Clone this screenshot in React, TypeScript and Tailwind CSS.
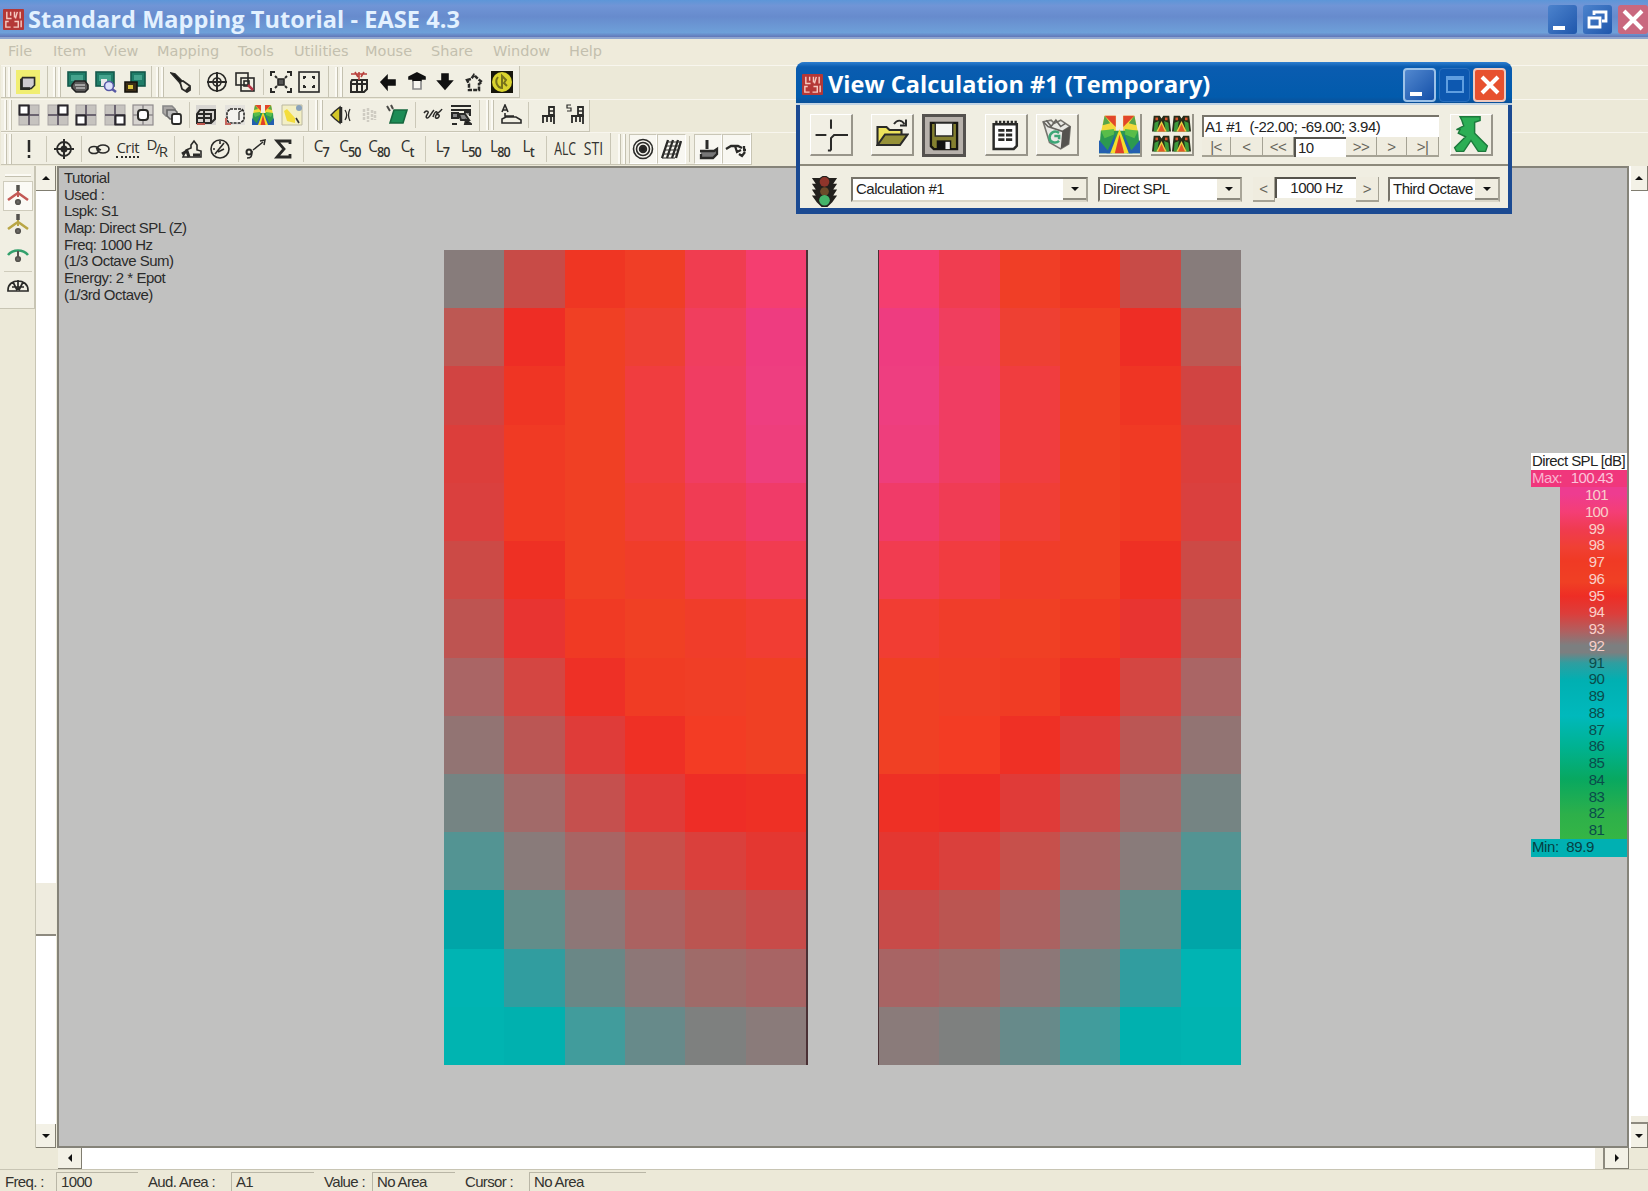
import React from "react";

type Kids = { children?: React.ReactNode };

const leftMap: string[][] = [
  ["#877c7b", "#c84b47", "#ef3623", "#f03e26", "#f03d50", "#f43e70"],
  ["#bd5853", "#ee2d25", "#f04024", "#ee4033", "#f03e5e", "#ee3c80"],
  ["#d14442", "#ef3524", "#f04024", "#f03d3f", "#f03d62", "#ee3e80"],
  ["#dc3e3b", "#f03a24", "#f04024", "#f03d3f", "#f03d62", "#ee3e7c"],
  ["#da403e", "#f03a24", "#f04024", "#f03e36", "#f03c54", "#f03b68"],
  ["#cc4a46", "#ee3024", "#f04024", "#f03d2a", "#f13c40", "#f13c50"],
  ["#be5451", "#e83431", "#f03a24", "#f04024", "#f03d2a", "#f13d33"],
  ["#aa6565", "#d44642", "#ee3026", "#f03c24", "#f03e26", "#f04024"],
  ["#927473", "#bb5654", "#df3c39", "#ef3025", "#f33c24", "#f04024"],
  ["#758483", "#a26a69", "#c5504e", "#e03b38", "#ee2d26", "#ee3025"],
  ["#539493", "#897b7a", "#a86564", "#c7504b", "#da403c", "#e43731"],
  ["#00a5a8", "#628d8a", "#8d7777", "#ab6261", "#bb5551", "#c84b49"],
  ["#00b4b3", "#319d9f", "#6a8786", "#8d7777", "#9f6b69", "#a86464"],
  ["#00b4b1", "#00b1af", "#419c9c", "#678a8a", "#7e807f", "#8a7b7a"],
];
const rightMap = leftMap.map((row) => [...row].reverse());

function HeatMap({ rows, className }: { rows: string[][]; className: string }) {
  return (
    <div className={`grid h-[815px] grid-cols-6 grid-rows-[repeat(14,minmax(0,1fr))] border-[#4a3034] ${className}`}>
      {rows.flat().map((c, i) => (
        <div key={i} style={{ backgroundColor: c }} />
      ))}
    </div>
  );
}

function Svg({ children, size = "size-[22px]" }: Kids & { size?: string }) {
  return (
    <svg viewBox="0 0 22 22" className={`${size} shrink-0`} fill="none" stroke="#2a2a28" strokeWidth="1.6">
      {children}
    </svg>
  );
}

function Slot({ children, pressed }: Kids & { pressed?: boolean }) {
  return (
    <div className={`flex h-[30px] w-[28.5px] shrink-0 items-center justify-center ${pressed ? "border border-[#c9c6b6] border-r-white border-b-white bg-[#f8f7f1]" : ""}`}>
      {children}
    </div>
  );
}

const Sep = ({ w = "w-[7px]" }: { w?: string }) => (
  <div className={`flex h-[26px] ${w} shrink-0 justify-center`}>
    <div className="w-px bg-[#cbc8b8]" />
  </div>
);

function Grip({ w }: { w: string }) {
  return (
    <div className={`flex h-[30px] shrink-0 justify-end gap-[2px] pr-[3px] ${w}`}>
      <div className="w-[3px] border-r border-[#c4c1b0] bg-[#fbfaf4]" />
      <div className="w-[3px] border-r border-[#c4c1b0] bg-[#fbfaf4]" />
    </div>
  );
}

const Group = ({ children }: Kids) => (
  <div className="flex h-[32px] items-center border-r border-b border-[#c8c5b4] bg-[#f1efe3]">{children}</div>
);

const Row = ({ children }: Kids) => <div className="flex h-[33.5px] items-start border-t border-[#f8f6ee]">{children}</div>;

function Sub({ a, b }: { a: string; b: string }) {
  return (
    <span className="flex scale-x-90 items-start font-['Open_Sans',sans-serif] leading-none text-[#33332f]">
      <span className="-mr-[1px] inline-block text-[17px] leading-[15px]">{a}</span>
      <span className="mt-[6px] text-[14px] leading-[16px] font-semibold tracking-[-1px]">{b}</span>
    </span>
  );
}

/* Four panes with one of them emphasised */
function Panes({ x, y, s = 9 }: { x: number; y: number; s?: number }) {
  return (
    <Svg>
      <rect x="1" y="1" width="20" height="20" fill="#c6c3bf" stroke="#a9a5a5" strokeWidth="1" />
      <path d="M11 1v20M1 11h20" stroke="#6b6470" strokeWidth="2" />
      <rect x={x} y={y} width={s} height={s} fill="#fff" stroke="#29262b" strokeWidth="2" />
    </Svg>
  );
}

function Screen({ extra }: { extra: "stack" | "find" | "print" }) {
  return (
    <Svg>
      {extra === "print" ? (
        <>
          <rect x="7" y="1" width="14" height="14" fill="#1f7d68" stroke="#15594c" />
          <path d="M10 4h8v5h-8z" fill="#45a38d" stroke="none" />
          <path d="M1 11h12v10H1z" fill="#3b2d18" stroke="#15120c" />
          <path d="M4 14h5v4H4z" fill="#d8c23a" stroke="none" />
        </>
      ) : (
        <>
          <rect x="1" y="1" width="18" height="14" fill="#1f7d68" stroke="#15594c" />
          <path d="M4 4h12v6H4z" fill="#45a38d" stroke="none" />
        </>
      )}
      {extra === "stack" && (
        <>
          <path d="M5 14l3-4h10l3 4v4l-3 3H9l-4-4z" fill="#5c5a5a" stroke="#222" />
          <path d="M8 14h10M9 17h9" stroke="#bbb" />
        </>
      )}
      {extra === "find" && (
        <>
          <path d="M6 8h6v7H6z" fill="#e9e9e9" stroke="none" />
          <circle cx="14" cy="15" r="4.5" fill="#dce0fb" stroke="#5658a5" />
          <path d="M17 18l4 3" stroke="#5658a5" strokeWidth="2.5" />
        </>
      )}
    </Svg>
  );
}

function ColorMap({ size }: { size?: string }) {
  return (
    <Svg size={size}>
      <g stroke="none">
        <path d="M3 1h6v9H1z" fill="#f3d83a" />
        <path d="M13 1h6l2 9h-8z" fill="#f3d83a" />
        <path d="M3 1h6v6zM19 1h-6v6z" fill="#e2462a" />
        <path d="M3 1l3 4-4 1zM19 1l-3 4 4 1z" fill="#58a549" />
        <path d="M1 9h20l1 12H0z" fill="#2c9a50" />
        <path d="M0 14l6 7H0zM22 14l-6 7h6z" fill="#235fb0" />
        <path d="M9 10L4 21h3zM13 10l5 11h-3z" fill="#235fb0" />
        <path d="M1 9l7-1v3l-5 2zM21 9l-7-1v3l5 2z" fill="#58bd49" />
        <path d="M11 8l5 13H6z" fill="#f6dd2d" />
        <path d="M11 11l2.500 10h-5z" fill="#e0402a" />
        <path d="M9.500 0h3v7h-3z" fill="#f3f1e6" />
      </g>
    </Svg>
  );
}

function Chair({ s }: { s?: boolean }) {
  return (
    <Svg>
      {s && <path d="M7 1H3v3h4v3H3" strokeWidth="1.2" />}
      <path d="M14 3h5v8h-5zM7 12h13M8 12v7M12 12v6M16 12v6M19 9v11" strokeWidth="1.8" />
      <path d="M14 7h5" strokeWidth="1.5" />
    </Svg>
  );
}

function AppBadge() {
  return (
    <svg viewBox="0 0 22 22" className="h-[21px] w-[21px] shrink-0">
      <rect width="22" height="22" rx="1" fill="#b43736" />
      <path d="M4 3v7h5M6 13H3v6h5M12 3v6M15 3l-2 7M18 3v7M12 13h4v6h-5M19 12v7M8 3v4" stroke="#f5c9c0" strokeWidth="1.5" fill="none" />
    </svg>
  );
}

const Arrow = ({ dir }: { dir: "up" | "down" | "left" | "right" }) => (
  <svg viewBox="0 0 10 10" className="size-[10px]" fill="#111">
    {dir === "up" && <path d="M1 7l4-4 4 4z" />}
    {dir === "down" && <path d="M1 3l4 4 4-4z" />}
    {dir === "left" && <path d="M7 1L3 5l4 4z" />}
    {dir === "right" && <path d="M3 1l4 4-4 4z" />}
  </svg>
);

function ScrollBtn({ dir, className }: { dir: "up" | "down" | "left" | "right"; className: string }) {
  return (
    <div className={`flex shrink-0 items-center justify-center border-r border-b border-[#807d70] bg-[#f3f1e6] ${className}`}>
      <Arrow dir={dir} />
    </div>
  );
}

function ToolBtn({ children, className = "" }: Kids & { className?: string }) {
  return (
    <div className={`flex h-[42px] w-[43px] shrink-0 items-center justify-center border-t border-l border-r-2 border-b-2 border-t-white border-l-white border-r-[#98958a] border-b-[#98958a] bg-[#f1efe4] ${className}`}>
      {children}
    </div>
  );
}

const NavBtn = ({ children, className = "" }: Kids & { className?: string }) => (
  <div className={`flex shrink-0 items-center justify-center border-r border-b-2 border-[#a5a294] bg-[#efecdf] text-[15px] leading-none text-[#66645a] ${className}`}>{children}</div>
);

function Select({ children, className }: Kids & { className: string }) {
  return (
    <div className={`flex h-[25px] shrink-0 items-center justify-between border-2 border-[#77746a] border-r-[#a8a598] border-b-[#dad7c8] bg-white pl-[3px] ${className}`}>
      <span className="whitespace-nowrap">{children}</span>
      <div className="flex h-full w-[23px] shrink-0 items-center justify-center border-b-2 border-[#8d8a7f] bg-[#f0ede0]">
        <Arrow dir="down" />
      </div>
    </div>
  );
}

const WinBtn = ({ children, className }: Kids & { className: string }) => (
  <div className={`flex shrink-0 items-center justify-center ${className}`}>
    <svg viewBox="0 0 28 28" className="size-[28px]" fill="none" stroke="#fff" strokeWidth="3">
      {children}
    </svg>
  </div>
);

const menu: [string, string][] = [
  ["File", "w-[45px]"],
  ["Item", "w-[51px]"],
  ["View", "w-[53px]"],
  ["Mapping", "w-[81px]"],
  ["Tools", "w-[56px]"],
  ["Utilities", "w-[71px]"],
  ["Mouse", "w-[66px]"],
  ["Share", "w-[62px]"],
  ["Window", "w-[76px]"],
  ["Help", "w-[50px]"],
];

function Toolbars() {
  return (
    <div className="flex h-[101px] flex-col pl-[1px]">
      <Row>
        <Group>
          <Grip w="w-[13px]" />
          <Slot>
            <Svg size="size-[24px]">
              <rect width="22" height="22" fill="#f1ee72" stroke="none" />
              <path d="M6 7h11v7l-3 3H5V9z" fill="#cfcbd0" strokeWidth="1.5" />
              <path d="M5 8v9h8" strokeWidth="2.5" />
            </Svg>
          </Slot>
          <div className="w-[4px]" />
        </Group>
        <Group>
          <Grip w="w-[16px]" />
          <Slot><Screen extra="stack" /></Slot>
          <Slot><Screen extra="find" /></Slot>
          <Slot><Screen extra="print" /></Slot>
          <div className="w-[2px]" />
        </Group>
        <Group>
          <Grip w="w-[15px]" />
          <Slot>
            <Svg><path d="M1 2l4 1 8 8-2 2z" fill="#111" /><path d="M10 11l3-1 7 5v4l-3 2-5-3z" fill="#f1efe3" strokeWidth="1.8" /><path d="M16 20l4-4" strokeWidth="2.5" /></Svg>
          </Slot>
          <Sep />
          <Slot>
            <Svg><circle cx="11" cy="11" r="9" /><circle cx="11" cy="11" r="4" /><path d="M11 1v20M1 11h20" strokeWidth="2" /></Svg>
          </Slot>
          <Slot>
            <Svg><rect x="2" y="2" width="12" height="12" /><rect x="7" y="7" width="13" height="13" /><rect x="10" y="10" width="5" height="5" /><path d="M14 14l5 5" stroke="#b73545" strokeWidth="2.5" /></Svg>
          </Slot>
          <Sep />
          <Slot>
            <Svg><path d="M1 5V1h4M17 1h4v4M21 17v4h-4M5 21H1v-4M5 5l2 2M17 5l-2 2M5 17l2-2M17 17l-2-2" strokeWidth="2" /><rect x="8" y="8" width="6" height="6" fill="#555" /></Svg>
          </Slot>
          <Slot>
            <Svg><rect x="1" y="1" width="20" height="20" /><path d="M5 6h3M14 6h3M5 16h3M14 16h3M6 5v3M16 5v3M6 14v3M16 14v3" strokeWidth="2" /></Svg>
          </Slot>
          <div className="w-[4px]" />
        </Group>
        <Group>
          <Grip w="w-[17px]" />
          <Slot>
            <Svg><path d="M3 9h15v9l-3 3H2v-10zM3 13h15M8 9v12M13 9v12" strokeWidth="2" /><path d="M2 3h16M10 1v8M6 1l3 5M15 1l-3 5" stroke="#b9403c" /></Svg>
          </Slot>
          <Slot><Svg><path d="M4 11l6-6v4h8v5h-8v4z" fill="#111" stroke="#111" /></Svg></Slot>
          <Slot><Svg><path d="M11 2l8 4v2h-4v2H7V8H3V6z" fill="#111" stroke="#111" /><path d="M7 10v8h8v-8" stroke="#888" fill="#f7f6f0" /></Svg></Slot>
          <Slot><Svg><path d="M8 3h6v7h4l-7 8-7-8h4z" fill="#111" stroke="#111" /></Svg></Slot>
          <Slot><Svg><path d="M4 9l4-1 3-4 4 4 4 3-3 2v6H6v-6z" strokeWidth="2.5" strokeDasharray="4 1.2" /></Svg></Slot>
          <Slot>
            <Svg><rect width="22" height="22" fill="#16150b" stroke="none" /><circle cx="11" cy="11" r="10" fill="#d9d32e" stroke="none" /><path d="M7 6c-4 5 0 11 4 11V5l4 4-2 3 3 3" stroke="#77721c" strokeWidth="2" /></Svg>
          </Slot>
          <div className="w-[2px]" />
        </Group>
      </Row>
      <Row>
        <Group>
          <Grip w="w-[14px]" />
          <Slot><Panes x={1.5} y={1.5} /></Slot>
          <Slot><Panes x={11.5} y={1.5} /></Slot>
          <Slot><Panes x={1.5} y={11.5} /></Slot>
          <Slot><Panes x={11.5} y={11.5} /></Slot>
          <Slot>
            <Svg>
              <rect x="1" y="1" width="20" height="20" fill="#d6d3cf" stroke="#8f8b8d" strokeWidth="1.2" />
              <path d="M11 1v4M11 17v4M1 11h4M17 11h4" stroke="#8f8b8d" />
              <rect x="6" y="6" width="10" height="10" rx="3" fill="#fff" strokeWidth="2" />
            </Svg>
          </Slot>
          <Slot>
            <Svg><path d="M2 2h9l3 3v7H5L2 9z" fill="#aaa7a5" stroke="#888" /><path d="M6 6h8l2 2v7H9l-3-3z" fill="#bbb" stroke="#666" /><rect x="11" y="10" width="9" height="10" rx="2" fill="#fff" strokeWidth="1.8" /></Svg>
          </Slot>
          <Sep w="w-[6px]" />
          <Slot>
            <Svg><path d="M1 1h20v20H1z" fill="#d8d6d2" stroke="none" /><path d="M5 6h15v9l-4 4H2V10zM2 10h14v9M9 6v13M2 14h14" strokeWidth="2" /><path d="M2 20h8" stroke="#bc564d" strokeWidth="2" /></Svg>
          </Slot>
          <Slot>
            <Svg><path d="M1 1h20v20H1z" fill="#e4e2dd" stroke="none" /><path d="M6 5h12l2 3v8l-4 3H5l-2-3V8z" fill="#f4f3ef" strokeWidth="1.6" strokeDasharray="3 1" /><path d="M15 8v8M15 8l4-2" strokeWidth="1.2" /><path d="M2 14v6h5" stroke="#c6655d" strokeWidth="2" /></Svg>
          </Slot>
          <Slot><ColorMap /></Slot>
          <Slot>
            <Svg><path d="M1 1h20v20H1z" fill="#f3efc4" stroke="#bbb8a0" strokeWidth="1" /><path d="M3 7l3-2 8 9v5l-8-2z" fill="#f4dd3d" stroke="none" /><path d="M15 14l3 5" stroke="#333" /><circle cx="18" cy="4" r="3" fill="#8aa3bb" stroke="none" /></Svg>
          </Slot>
          <div className="w-[2px]" />
        </Group>
        <Group>
          <Grip w="w-[17px]" />
          <Slot>
            <Svg><path d="M2 11l4-4 5-4v16l-5-4z" fill="#d3c728" strokeWidth="1.4" /><path d="M12 3v16" strokeWidth="2.5" /><path d="M16 6c2 3 2 7 0 10M21 5c-2 4-2 8 0 12" strokeWidth="1.3" /></Svg>
          </Slot>
          <Slot>
            <Svg><g stroke="#cfccc2" strokeWidth="2.5"><path d="M6 5v12M10 4v14M14 6v10M17 7v9" strokeDasharray="3 1" /></g></Svg>
          </Slot>
          <Slot>
            <Svg><path d="M8 6h13l-4 13H4z" fill="#1d8c56" stroke="#16683f" /><path d="M1 2l3 5M5 1l2 4" stroke="#4a4a46" strokeWidth="2" /></Svg>
          </Slot>
          <Sep />
          <Slot>
            <Svg><path d="M2 9c2-3 5-2 4 0s-3 4-1 5 4-5 7-8M11 13c1-4 3-6 4-5s-3 5-1 6 4-2 3-3-3 0-1-2 3-2 4-4" strokeWidth="1.5" /></Svg>
          </Slot>
          <Slot>
            <Svg><path d="M1 2h20M1 6h20" strokeWidth="2" /><path d="M2 9h6v5H2zM14 8h6v4M9 10h6l4 6h-8z" fill="#888" strokeWidth="2" /><path d="M2 20h5M16 16l5 4h-6z" fill="#111" strokeWidth="2" /></Svg>
          </Slot>
          <div className="w-[3px]" />
        </Group>
        <Group>
          <Grip w="w-[17px]" />
          <Slot>
            <Svg><path d="M2 8l3-7 3 7M3 6h4M5 9v3h9M2 19v-4l4-2h10l5 3v3z" strokeWidth="1.6" /></Svg>
          </Slot>
          <Sep />
          <Slot><Chair /></Slot>
          <Slot><Chair s /></Slot>
        </Group>
      </Row>
      <Row>
        <Group>
          <Grip w="w-[14px]" />
          <Slot><Svg><path d="M11 2v12M11 17v3" strokeWidth="2.5" /></Svg></Slot>
          <Sep w="w-[6px]" />
          <Slot>
            <Svg><circle cx="11" cy="11" r="7" strokeWidth="1.8" /><circle cx="11" cy="11" r="2.5" fill="#222" strokeWidth="2" /><path d="M11 1v20M1 11h20" strokeWidth="2" /></Svg>
          </Slot>
          <Sep />
          <Slot>
            <Svg><ellipse cx="6" cy="12" rx="5" ry="3.5" /><ellipse cx="15" cy="11" rx="6" ry="4" /><path d="M8 10l5 2" /></Svg>
          </Slot>
          <Slot>
            <span className="border-b-2 border-dotted border-[#2a2a28] font-['Open_Sans',sans-serif] text-[15px] leading-[17px] tracking-[-0.5px] text-[#33332f]">Crit</span>
          </Slot>
          <Slot>
            <span className="flex font-['Open_Sans',sans-serif] text-[15px] leading-[16px] tracking-[-2px] text-[#33332f]">
              <span className="-mt-[3px]">D</span><span className="mt-px">/</span><span className="mt-[4px]">R</span>
            </span>
          </Slot>
          <Sep />
          <Slot>
            <Svg><path d="M2 19h18v-6l-4-1V7l-3-4-3 4v3l-5 2z" /><path d="M1 16l5-3 2 6M12 17h7" strokeWidth="3" /></Svg>
          </Slot>
          <Slot><Svg><circle cx="11" cy="11" r="9" /><path d="M6 16L15 5M9 14l6-3M11 3v3M4 11h2" /></Svg></Slot>
          <Sep />
          <Slot>
            <Svg><circle cx="4" cy="14" r="2.5" strokeWidth="2" /><path d="M7 13c0 6-1 7-5 7M8 12l10-8M15 3l5-1-1 5" strokeWidth="1.5" /></Svg>
          </Slot>
          <Slot><Svg><path d="M17 6V3H4l7 8-7 8h13v-3" strokeWidth="2.8" /></Svg></Slot>
          <Sep w="w-[9px]" />
          <Slot><Sub a="C" b="7" /></Slot>
          <Slot><Sub a="C" b="50" /></Slot>
          <Slot><Sub a="C" b="80" /></Slot>
          <Slot><Sub a="C" b="t" /></Slot>
          <Sep />
          <Slot><Sub a="L" b="7" /></Slot>
          <Slot><Sub a="L" b="50" /></Slot>
          <Slot><Sub a="L" b="80" /></Slot>
          <Slot><Sub a="L" b="t" /></Slot>
          <Sep w="w-[8px]" />
          <Slot><span className="inline-block scale-x-[0.68] font-['Open_Sans',sans-serif] text-[18px] text-[#33332f]">ALC</span></Slot>
          <Slot><span className="inline-block scale-x-[0.78] font-['Open_Sans',sans-serif] text-[18px] text-[#33332f]">STI</span></Slot>
          <div className="w-[2px]" />
        </Group>
        <Group>
          <Grip w="w-[18px]" />
          <Slot pressed>
            <Svg><circle cx="11" cy="11" r="9.5" /><circle cx="11" cy="11" r="6.5" /><circle cx="11" cy="11" r="3" fill="#222" strokeWidth="2.5" /></Svg>
          </Slot>
          <Slot pressed>
            <Svg><path d="M2 20L8 2M7 20l6-18M12 20l6-18M16 20l5-17" strokeWidth="2.3" /><path d="M7 4h14M5 8h14M4 12h14M3 16h14M2 20h13" strokeWidth="1.2" /></Svg>
          </Slot>
          <Sep w="w-[8px]" />
          <Slot pressed>
            <Svg><path d="M10 2v9" strokeWidth="3" /><path d="M3 13h14l3-2v5l-4 4H4v-4" fill="#777" strokeWidth="2.3" /></Svg>
          </Slot>
          <Slot pressed>
            <Svg><path d="M1 11l5-3h7l4 2M10 8l2 6 4-2M19 8v3M20 14l-3 4-3-2M18 12h3" strokeWidth="2.3" /></Svg>
          </Slot>
        </Group>
      </Row>
    </div>
  );
}

function Speaker({ color, mode }: { color: string; mode: "up" | "mid" | "down" }) {
  return (
    <Svg>
      {mode !== "down" && <path d="M11 0v6" stroke="#55534e" strokeWidth="3.5" />}
      <path d={mode === "down" ? "M1 11c5-6 15-6 20 0" : "M1 15l7-5 3-2 3 2 7 5"} stroke={color} strokeWidth="2.6" />
      {mode !== "down" && <path d="M11 6v6" stroke={color} strokeWidth="2" />}
      {mode === "down" && <path d="M11 7v6" stroke="#55534e" strokeWidth="2" />}
      <circle cx="11" cy={mode === "down" ? 15 : 17} r="2.3" fill="#6a6864" stroke="#55534e" />
    </Svg>
  );
}

function LeftTools() {
  return (
    <div className="flex h-[143px] w-[35px] flex-col items-center border-r border-b border-[#c8c5b4] bg-[#f1efe3] pl-[2px]">
      <div className="mt-[8px] h-[3px] w-[26px] border-b border-[#c4c1b0] bg-[#fbfaf4]" />
      <div className="mt-[4px] flex h-[30px] w-[30px] items-center justify-center border border-[#cfccbc] bg-[#fbfaf5]">
        <Speaker color="#c35955" mode="up" />
      </div>
      <div className="flex h-[27px] items-center"><Speaker color="#b9a645" mode="mid" /></div>
      <div className="flex h-[34px] w-[28px] items-center justify-center border-b border-[#cfccbc]"><Speaker color="#33a06c" mode="down" /></div>
      <div className="flex h-[28px] items-center">
        <Svg><path d="M1 15c0-12 20-12 20 0v1H1zM11 5v10M6 7l4 8M16 7l-4 8M5 12h12" strokeWidth="1.7" /></Svg>
      </div>
    </div>
  );
}

const info = ["Tutorial", "Used :", "Lspk: S1", "Map: Direct SPL (Z)", "Freq: 1000 Hz", "(1/3 Octave Sum)", "Energy: 2 * Epot", "(1/3rd Octave)"];
const levels = Array.from({ length: 21 }, (_, i) => 101 - i);

function Legend() {
  return (
    <div className="absolute top-[285px] right-0 flex w-[96px] flex-col items-end text-[15px] leading-[16.8px] tracking-[-0.6px]">
      <div className="h-[17px] w-full bg-white pl-px whitespace-nowrap text-[#222]">Direct SPL [dB]</div>
      <div className="flex h-[17px] w-full justify-between bg-[#f0377c] pr-[14px] pl-px">
        <span className="text-[#fbb3cf]">Max:</span><span className="text-[#fbc3da]">100.43</span>
      </div>
      <div className="w-[67px] bg-[linear-gradient(#ee3c90_2%,#f43e76_7%,#f03b50_12%,#f04034_17%,#f03a24_21%,#f04024_27%,#ee2d25_31%,#dc3e3b_36%,#b06060_41%,#7c7f80_45%,#7c7f80_47%,#2f9ea0_50%,#00b0b2_55%,#00b9bc_65%,#00b290_74%,#08a860_83%,#2db04a_93%,#35b545)]">
        {levels.map((n) => (
          <div key={n} className={`h-[16.76px] pl-[6px] text-center ${n > 91 ? "text-[#f9cfc9]" : "text-[#0a4c4b]"}`}>{n}</div>
        ))}
      </div>
      <div className="h-[18px] w-full bg-[#00b0b2] pl-px tracking-[-0.4px] whitespace-pre text-[#063f42]">Min:  89.9</div>
    </div>
  );
}

function CalcWindow() {
  return (
    <div className="absolute top-[62px] left-[796px] flex h-[152px] w-[716px] flex-col rounded-t-[9px] border-x-4 border-b-[6px] border-[#1b4a92] bg-[#f0eee2] text-[15px] tracking-[-0.5px] text-[#222]">
      <div className="-mx-1 flex h-[43px] shrink-0 items-center rounded-t-[8px] border-b-2 border-[#c2d3e2] bg-[linear-gradient(#2d7ed0,#0a5cb0_12%,#025bac_85%,#0a5098)] pt-[4px] pr-[6px] pl-[6px]">
        <AppBadge />
        <span className="ml-[5px] flex-1 font-['Open_Sans',sans-serif] text-[23.5px] leading-none font-bold tracking-[0.05px] whitespace-nowrap text-white">View Calculation #1 (Temporary)</span>
        <WinBtn className="h-[34px] w-[33px] rounded-[4px] border-2 border-[#9cc2e8] bg-[linear-gradient(135deg,#5288cf,#1450a8)]"><path d="M4 23h12" strokeWidth="4" /></WinBtn>
        <WinBtn className="mx-[3px] h-[34px] w-[31px] rounded-[4px] border border-[#2a6fbd] bg-[#0d58b0]"><path d="M6 6h16v15H6zM6 8h16" stroke="#5f9ee0" strokeWidth="2" /></WinBtn>
        <WinBtn className="h-[34px] w-[33px] rounded-[4px] border-2 border-[#f0c9bd] bg-[#e7512f]"><path d="M6 6l16 16M22 6L6 22" strokeWidth="4" /></WinBtn>
      </div>
      <div className="flex h-[61px] shrink-0 items-start border-b-2 border-[#8c897b] pt-[9px] pl-[10px]">
        <ToolBtn>
          <Svg size="size-[34px]"><path d="M1 11h7M11 1v6M11 21v-8l2-2h9M11 21H9" strokeWidth="1.3" /></Svg>
        </ToolBtn>
        <ToolBtn className="ml-[18px]">
          <Svg size="size-[33px]"><path d="M1 18V6h6l2 2h8v3" fill="#eee35c" strokeWidth="1.4" /><path d="M1 18l5-7h15l-5 7z" fill="#969138" strokeWidth="1.4" /><path d="M12 4c2-3 5-3 7 0M20 1v4h-4" strokeWidth="1.3" /></Svg>
        </ToolBtn>
        <div className="ml-[8px] flex h-[43px] w-[44px] shrink-0 items-center justify-center border-[3px] border-[#55524f] bg-[#b7b1ab]">
          <Svg size="size-[32px]"><path d="M2 2h18v18H4l-2-2z" fill="#84802f" stroke="#161510" /><path d="M5 2h12v9H5z" fill="#f5f5f1" strokeWidth="1" /><path d="M6 14h10v6H6z" fill="#111" stroke="none" /><path d="M12 15h3v5h-3z" fill="#eee" stroke="none" /></Svg>
        </div>
        <ToolBtn className="ml-[19px]">
          <Svg size="size-[34px]"><path d="M3 4h15v14l-2 2H3z" fill="#fff" /><path d="M4 3h14" strokeWidth="2.5" strokeDasharray="1.5 1" /><path d="M6 8h4M11 8h4M6 11h4M11 11h4M6 14h4M11 14h4" strokeWidth="1.9" /></Svg>
        </ToolBtn>
        <ToolBtn className="ml-[8px]">
          <Svg size="size-[35px]">
            <path d="M2 3l5-1 2 2 4-2 6 4-1 11-5 3-7-4z" fill="#e9e9e4" stroke="#77756f" strokeWidth="1" />
            <path d="M2 3l3 3 9 3 5-3M4 2l3 4 3-4 3 4 3-2" stroke="#66645f" strokeWidth="1" />
            <path d="M14 9l5-3-1 11-5 3z" fill="#55534f" stroke="none" />
            <path d="M12 10c-3-2-6 0-6 3s4 4 6 2M9 12h3v2" stroke="#3ca676" strokeWidth="1.6" />
          </Svg>
        </ToolBtn>
        <div className="ml-[20px] flex h-[43px] w-[43px] shrink-0 items-center justify-center border-r-2 border-b-2 border-[#98958a]"><ColorMap size="size-[41px]" /></div>
        <div className="ml-[9px] grid h-[42px] w-[43px] shrink-0 grid-cols-2 gap-px border-r-2 border-b-2 border-[#98958a] p-px">
          {[0, 1, 2, 3].map((i) => (
            <svg key={i} viewBox="0 0 22 22" className="size-[19px]">
              <path d="M2 1h7l2 3 2-3h7l2 18H0z" fill="#262c18" />
              <path d="M3 9l5-2-2 12H2zM19 9l-5-2 2 12h4z" fill="#3c9a3a" />
              <path d="M4 3h3v3H4zM15 3h3v3h-3z" fill="#d6542c" />
              <path d="M11 7l6 12H5z" fill="#ecd544" />
              <path d="M11 10l4 9H7z" fill="#e3582a" />
            </svg>
          ))}
        </div>
        <div className="ml-[8px] flex w-[237px] shrink-0 flex-col pt-px">
          <div className="h-[22px] border-t-2 border-l-2 border-[#77746a] bg-white pl-[1px] text-[15px] leading-[20px] tracking-[-0.45px] whitespace-pre">A1 #1  (-22.00; -69.00; 3.94)</div>
          <div className="flex h-[20px]">
            <NavBtn className="w-[29px]">|&lt;</NavBtn>
            <NavBtn className="w-[32px]">&lt;</NavBtn>
            <NavBtn className="w-[31px]">&lt;&lt;</NavBtn>
            <div className="w-[52px] border-t-2 border-l-2 border-[#55534c] bg-white pl-[2px] leading-[18px]">10</div>
            <NavBtn className="w-[31px]">&gt;&gt;</NavBtn>
            <NavBtn className="w-[30px]">&gt;</NavBtn>
            <NavBtn className="w-[32px]">&gt;|</NavBtn>
          </div>
        </div>
        <ToolBtn className="ml-[11px]">
          <Svg size="size-[40px]"><path d="M5 1h11v2l-3 1v6l7 7-1 3h-4l-4-6-4 6H3l-1-2 6-6-4-2 1-2H3l4-2-1-3z" fill="#2cae55" stroke="#1c7a3c" strokeWidth="0.8" /></Svg>
        </ToolBtn>
      </div>
      <div className="flex h-[42px] items-start pt-[10px] pl-[11px]">
        <svg viewBox="0 0 26 32" className="h-[31px] w-[27px] shrink-0">
          <path d="M0 2h8l3-2h4l3 2h8l-4 6h4l-4 6h4l-4 6h4l-5 7-5 5h-6l-5-5-5-7h4l-4-6h4L0 8h4z" fill="#22201d" />
          <circle cx="13" cy="6" r="5" fill="#8e352b" />
          <circle cx="13" cy="16" r="4.5" fill="#6c4b2a" />
          <circle cx="13" cy="25" r="5.5" fill="#44b46a" />
        </svg>
        <Select className="mt-px ml-[13px] w-[237px]">Calculation #1</Select>
        <Select className="mt-px ml-[10px] w-[144px]">Direct SPL</Select>
        <NavBtn className="mt-px ml-[11px] h-[25px] w-[22px]">&lt;</NavBtn>
        <div className="mt-px h-[21px] w-[81px] shrink-0 border-t-2 border-l-2 border-[#55534c] bg-white text-center leading-[18px]">1000 Hz</div>
        <NavBtn className="mt-px h-[25px] w-[23px]">&gt;</NavBtn>
        <Select className="mt-px ml-[9px] w-[112px]">Third Octave</Select>
      </div>
    </div>
  );
}

const status: [string, string, string, string][] = [
  ["Freq. :", "w-[51px]", "1000", "w-[82px]"],
  ["Aud. Area :", "w-[83px]", "A1", "w-[83px]"],
  ["Value :", "w-[48px]", "No Area", "w-[83px]"],
  ["Cursor :", "w-[64px]", "No Area", "w-[117px]"],
];

export default function App() {
  return (
    <div className="relative flex h-[1191px] w-[1648px] flex-col overflow-hidden bg-[#ece9d8] font-['Liberation_Sans',sans-serif]">
      <header className="flex h-[39px] shrink-0 items-center border-b-2 border-[#8fa5cf] bg-[linear-gradient(#5d96d8,#7095d6_15%,#678bcd_45%,#6ea0d9_88%,#6277b8)] pt-[2px] pl-[3px]">
        <AppBadge />
        <span className="ml-[4px] flex-1 font-['Open_Sans',sans-serif] text-[23.5px] leading-none font-bold tracking-[0.07px] whitespace-nowrap text-[#e3f1ff]">Standard Mapping Tutorial - EASE 4.3</span>
        <WinBtn className="h-[29px] w-[29px] rounded-[3px] bg-[linear-gradient(135deg,#4c83cd,#2057ac)]"><path d="M4 22h12" strokeWidth="4" /></WinBtn>
        <WinBtn className="mx-[6px] h-[29px] w-[29px] rounded-[3px] bg-[linear-gradient(135deg,#4c83cd,#2057ac)]"><path d="M10 9V6h12v9h-4M5 12h11v9H5z" strokeWidth="2.8" /></WinBtn>
        <WinBtn className="h-[29px] w-[30px] rounded-[3px] bg-[#c9687f]"><path d="M5 5l18 18M23 5L5 23" strokeWidth="4" /></WinBtn>
      </header>
      <nav className="flex h-[26px] shrink-0 items-center bg-[#efebdb] pl-[8px] font-['DejaVu_Sans',sans-serif] text-[14.5px] text-[#c3bfae]">
        {menu.map(([m, w]) => (
          <span key={m} className={`shrink-0 ${w}`}>{m}</span>
        ))}
      </nav>
      <Toolbars />
      <main className="flex h-[982px] shrink-0">
        <LeftTools />
        <div className="mr-px flex w-[21px] flex-col border-l border-[#c8c5b4] bg-white">
          <ScrollBtn dir="up" className="h-[25px]" />
          <div className="mt-[692px] h-[53px] border-b-2 border-[#8d8a7f] bg-[#efecdf]" />
          <ScrollBtn dir="down" className="mt-auto h-[24px]" />
        </div>
        <div className="relative w-[1572px] border-2 border-[#858379] bg-[#c1c1c0]">
          <div className="pt-[2px] pl-[5px] text-[15px] leading-[16.65px] tracking-[-0.5px] text-[#2b2b2b]">
            {info.map((t) => (
              <div key={t}>{t}</div>
            ))}
          </div>
          <div className="absolute top-[82px] left-[385px] flex gap-[70px]">
            <HeatMap rows={leftMap} className="w-[364px] border-r-2" />
            <HeatMap rows={rightMap} className="w-[363px] border-l" />
          </div>
          <Legend />
        </div>
        <div className="flex flex-1 flex-col bg-white pl-[2px]">
          <ScrollBtn dir="up" className="h-[25px]" />
          <div className="mt-auto h-[8px] border-b-2 border-[#8d8a7f] bg-[#efecdf]" />
          <ScrollBtn dir="down" className="h-[24px]" />
        </div>
      </main>
      <div className="flex h-[22px] shrink-0 border-b border-[#c8c5b4] pr-[19px] pl-[58px]">
        <ScrollBtn dir="left" className="w-[24px]" />
        <div className="flex-1 bg-white" />
        <div className="w-[10px] border-r-2 border-[#8d8a7f] bg-[#efecdf]" />
        <ScrollBtn dir="right" className="w-[24px]" />
      </div>
      <footer className="flex flex-1 items-end pl-[5px] text-[15px] leading-[17px] tracking-[-0.65px] whitespace-nowrap text-[#33332f]">
        {status.map(([k, kw, v, vw], i) => (
          <React.Fragment key={i}>
            <span className={`h-[18px] shrink-0 ${kw}`}>{k}</span>
            <span className={`mr-[10px] h-[19px] shrink-0 border-t border-l border-[#b9b6a6] pl-[4px] ${vw}`}>{v}</span>
          </React.Fragment>
        ))}
      </footer>
      <CalcWindow />
    </div>
  );
}
